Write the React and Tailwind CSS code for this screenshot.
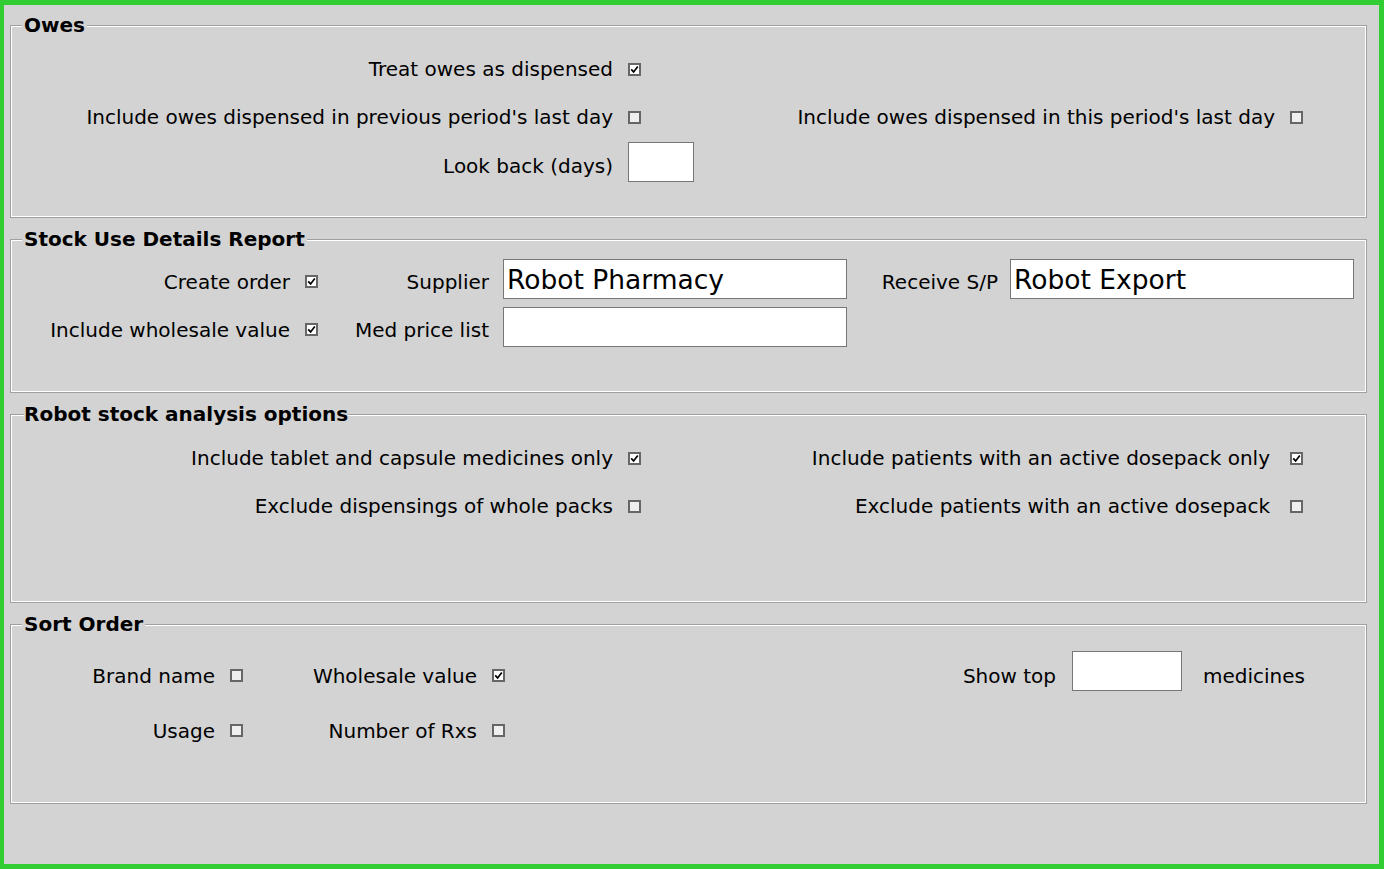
import { useState } from "react";

// small square tick box, drawn by hand so it keeps the old 13px look
function Tick({ on, onToggle, className = "" }) {
  return (
    <span
      onClick={onToggle}
      className={
        (on
          ? "inline-flex h-[13px] w-[13px] items-center justify-center border-2 border-[#666] bg-white "
          : "inline-flex h-[13px] w-[13px] items-center justify-center border-2 border-[#666] bg-[#efefef] ") +
        className
      }
    >
      {on && (
        <svg viewBox="0 0 9 9" className="h-[9px] w-[9px]">
          <path
            d="M1.2 4.4 L3.6 6.9 L7.8 1.4"
            stroke="#000"
            strokeWidth="1.7"
            fill="none"
          />
        </svg>
      )}
    </span>
  );
}

function Group({ title, tight, className, children }) {
  return (
    <fieldset
      className={
        "min-w-0 border border-[#a0a0a0] p-0 shadow-[inset_1px_1px_0_#fff,inset_-1px_-1px_0_#fff] " +
        className
      }
    >
      <legend
        className={
          tight
            ? "ml-[13px] bg-[#d3d3d3] px-0 text-[20px] font-bold leading-[23px]"
            : "ml-[11px] bg-[#d3d3d3] px-[2px] text-[20px] font-bold leading-[23px]"
        }
      >
        {title}
      </legend>
      {children}
    </fieldset>
  );
}

function Label({ children, className = "" }) {
  return (
    <div className={"whitespace-nowrap text-right " + className}>
      {children}
    </div>
  );
}

function Field({ value = "", className = "" }) {
  return (
    <input
      readOnly
      value={value}
      className={
        "h-[40px] border border-[#767676] bg-white px-[3px] text-[26.5px] text-black outline-none " +
        className
      }
    />
  );
}

export default function App() {
  const [opts, setOpts] = useState({
    treatOwes: true,
    prevLastDay: false,
    thisLastDay: false,
    createOrder: true,
    wholesale: true,
    tabletsOnly: true,
    dosepackOnly: true,
    wholePacks: false,
    excludeDosepack: false,
    brand: false,
    sortWholesale: true,
    usage: false,
    rxs: false
  });

  const flip = (key) =>
    setOpts((o) => ({ ...o, [key]: !o[key] }));

  return (
    <div className="min-h-screen bg-[#d3d3d3] font-['DejaVu_Sans',Verdana,sans-serif] text-[20px] text-black">
      <div className="flex h-[869px] flex-col gap-[10px] border-[5px] border-l-4 border-[#32cd32] pb-0 pl-[6px] pr-[12px] pt-[9px]">

        {/* OWES */}
        <Group title="Owes" className="h-[204px]">
          <div className="grid grid-cols-[617px_80px_582px_40px] grid-rows-[48px_48px_42px] items-center pt-[8px]">
            <Label className="pr-[15px]">Treat owes as dispensed</Label>
            <Tick on={opts.treatOwes} onToggle={() => flip("treatOwes")} />
            <div />
            <div />

            <Label className="pr-[15px]">
              Include owes dispensed in previous period's last day
            </Label>
            <Tick on={opts.prevLastDay} onToggle={() => flip("prevLastDay")} />
            <Label className="pr-[15px]">
              Include owes dispensed in this period's last day
            </Label>
            <Tick on={opts.thisLastDay} onToggle={() => flip("thisLastDay")} />

            <Label className="pr-[15px] pt-[7px]">Look back (days)</Label>
            <Field className="w-[66px]" />
            <div />
            <div />
          </div>
        </Group>

        {/* STOCK USE DETAILS */}
        <Group title="Stock Use Details Report" className="h-[165px]">
          <div className="grid grid-cols-[294px_30px_168px_344px_163px_344px] grid-rows-[48px_48px] items-center pt-[4px]">
            <Label className="pr-[15px] pt-[5px]">Create order</Label>
            <Tick
              on={opts.createOrder}
              onToggle={() => flip("createOrder")}
              className="mt-[5px]"
            />
            <Label className="pr-[14px] pt-[5px]">Supplier</Label>
            <Field value="Robot Pharmacy" className="w-[344px]" />
            <Label className="pr-[12px] pt-[5px]">Receive S/P</Label>
            <Field value="Robot Export" className="w-[344px]" />

            <Label className="pr-[15px] pt-[5px]">Include wholesale value</Label>
            <Tick
              on={opts.wholesale}
              onToggle={() => flip("wholesale")}
              className="mt-[5px]"
            />
            <Label className="pr-[14px] pt-[5px]">Med price list</Label>
            <Field className="w-[344px]" />
            <div />
            <div />
          </div>
        </Group>

        {/* ROBOT STOCK ANALYSIS */}
        <Group title="Robot stock analysis options" tight className="h-[200px]">
          <div className="grid grid-cols-[617px_80px_582px_40px] grid-rows-[48px_48px] items-center pt-[8px]">
            <Label className="pr-[15px]">
              Include tablet and capsule medicines only
            </Label>
            <Tick on={opts.tabletsOnly} onToggle={() => flip("tabletsOnly")} />
            <Label className="pr-[20px]">
              Include patients with an active dosepack only
            </Label>
            <Tick on={opts.dosepackOnly} onToggle={() => flip("dosepackOnly")} />

            <Label className="pr-[15px]">Exclude dispensings of whole packs</Label>
            <Tick on={opts.wholePacks} onToggle={() => flip("wholePacks")} />
            <Label className="pr-[20px]">
              Exclude patients with an active dosepack
            </Label>
            <Tick
              on={opts.excludeDosepack}
              onToggle={() => flip("excludeDosepack")}
            />
          </div>
        </Group>

        {/* SORT ORDER */}
        <Group title="Sort Order" className="h-[191px]">
          <div className="grid grid-cols-[219px_28px_234px_30px_550px_110px_auto] grid-rows-[55px_55px] items-center pt-[12px]">
            <Label className="pr-[15px]">Brand name</Label>
            <Tick on={opts.brand} onToggle={() => flip("brand")} />
            <Label className="pr-[15px]">Wholesale value</Label>
            <Tick on={opts.sortWholesale} onToggle={() => flip("sortWholesale")} />
            <Label className="pr-[16px]">Show top</Label>
            <Field className="mb-[9px] w-[110px]" />
            <div className="pl-[21px]">medicines</div>

            <Label className="pr-[15px]">Usage</Label>
            <Tick on={opts.usage} onToggle={() => flip("usage")} />
            <Label className="pr-[15px]">Number of Rxs</Label>
            <Tick on={opts.rxs} onToggle={() => flip("rxs")} />
            <div />
            <div />
            <div />
          </div>
        </Group>

      </div>
    </div>
  );
}
